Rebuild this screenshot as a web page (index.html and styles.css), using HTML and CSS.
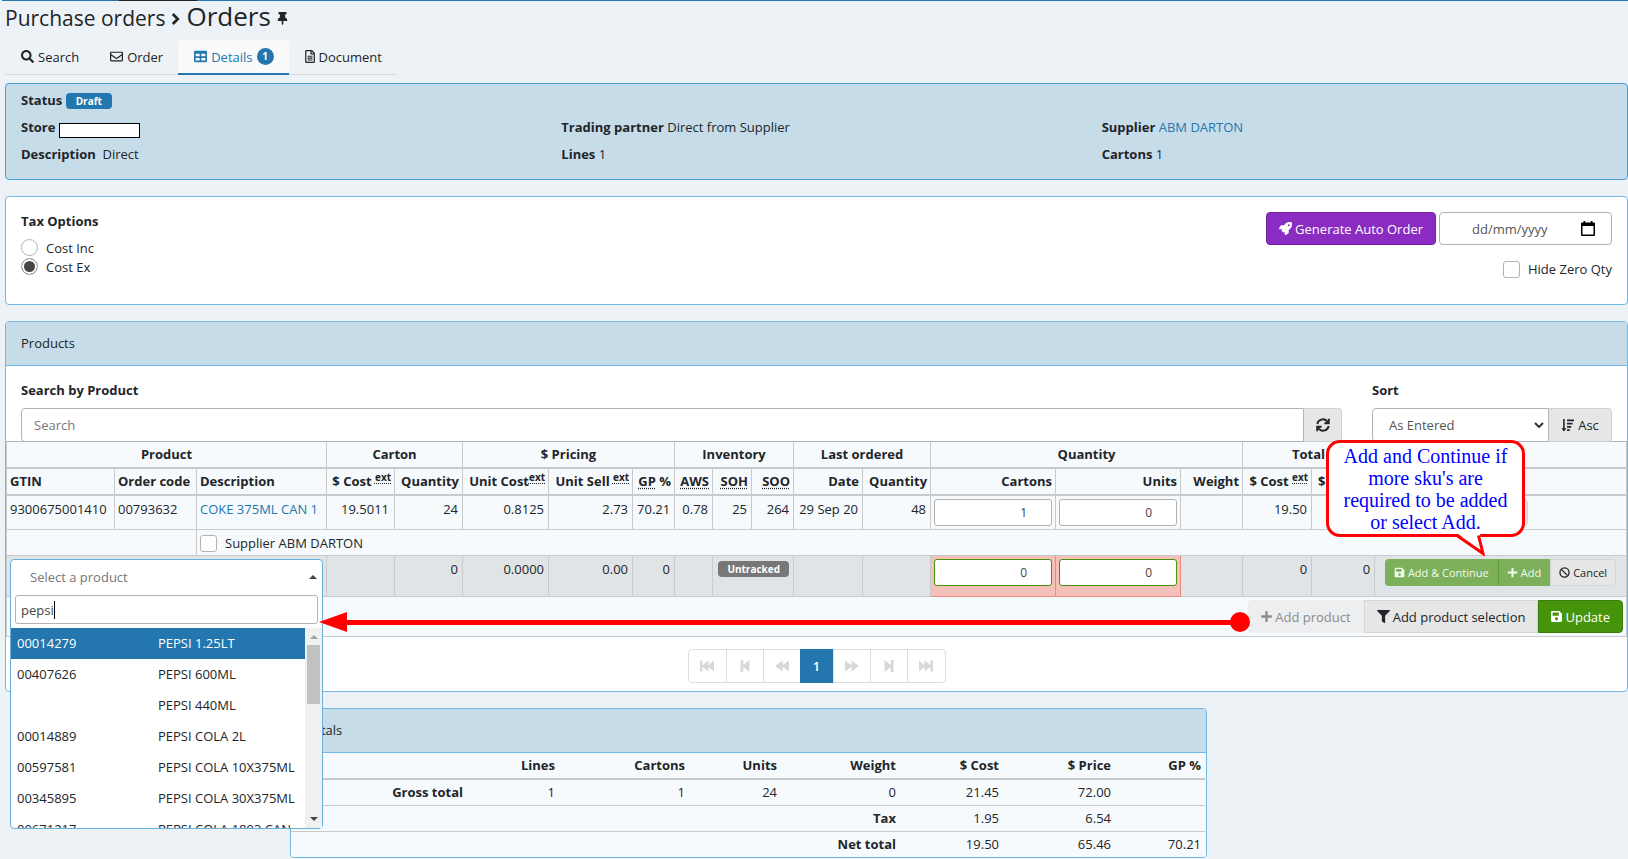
FILE: index.html
```html
<!DOCTYPE html>
<html lang="en">
<head>
<meta charset="utf-8">
<title>Purchase orders - Orders</title>
<link rel="stylesheet" href="styles.css">
</head>
<body>
<svg class="sprite" aria-hidden="true">
  <symbol id="i-search" viewBox="0 0 512 512"><path d="M505 442.7L405.3 343c-4.5-4.5-10.6-7-17-7H372c27.6-35.3 44-79.7 44-128C416 93.1 322.9 0 208 0S0 93.1 0 208s93.1 208 208 208c48.3 0 92.7-16.4 128-44v16.3c0 6.4 2.5 12.5 7 17l99.7 99.7c9.4 9.4 24.6 9.4 33.9 0l28.3-28.3c9.4-9.4 9.4-24.6.1-34zM208 336c-70.7 0-128-57.2-128-128 0-70.7 57.2-128 128-128 70.7 0 128 57.2 128 128 0 70.7-57.2 128-128 128z"/></symbol>
  <symbol id="i-envelope" viewBox="0 0 512 512"><path d="M464 64H48C21.49 64 0 85.49 0 112v288c0 26.51 21.49 48 48 48h416c26.51 0 48-21.49 48-48V112c0-26.51-21.49-48-48-48zm0 48v40.805c-22.422 18.259-58.168 46.651-134.587 106.49-16.841 13.247-50.201 45.072-73.413 44.701-23.208.375-56.579-31.459-73.413-44.701C106.18 199.465 70.425 171.067 48 152.805V112h416zM48 400V214.398c22.914 18.251 55.409 43.862 104.938 82.646 21.857 17.205 60.134 55.186 103.062 54.955 42.717.231 80.509-37.199 103.053-54.947 49.528-38.783 82.032-64.401 104.947-82.653V400H48z"/></symbol>
  <symbol id="i-table" viewBox="0 0 512 512"><path fill-rule="evenodd" d="M48 32h416a48 48 0 0 1 48 48v352a48 48 0 0 1-48 48H48a48 48 0 0 1-48-48V80a48 48 0 0 1 48-48zM64 150v92h160v-92zM288 150v92h160v-92zM64 318v92h160v-92zM288 318v92h160v-92z"/></symbol>
  <symbol id="i-file" viewBox="0 0 384 512"><path fill-rule="evenodd" d="M48 0h202a48 48 0 0 1 34 14l86 86a48 48 0 0 1 14 34v330a48 48 0 0 1-48 48H48a48 48 0 0 1-48-48V48A48 48 0 0 1 48 0zM48 48v416h288V176H232a24 24 0 0 1-24-24V48zM256 52v76h76zM96 224h192v40H96zM96 300h192v40H96zM96 376h192v40H96z"/></symbol>
  <symbol id="i-pin" viewBox="0 0 384 512"><path d="M298.028 214.267L285.793 96H328c13.255 0 24-10.745 24-24V24c0-13.255-10.745-24-24-24H56C42.745 0 32 10.745 32 24v48c0 13.255 10.745 24 24 24h42.207L85.972 214.267C37.465 236.82 0 277.261 0 328c0 13.255 10.745 24 24 24h136v104.007c0 1.242.289 2.467.845 3.578l24 48c2.941 5.882 11.364 5.893 14.311 0l24-48a8.008 8.008 0 0 0 .845-3.578V352h136c13.255 0 24-10.745 24-24-.001-51.183-37.983-91.42-85.973-113.733z"/></symbol>
  <symbol id="i-chevron" viewBox="0 0 10 14"><path d="M2 1.500L7.500 7 2 12.500" fill="none" stroke="currentColor" stroke-width="3"/></symbol>
  <symbol id="i-rocket" viewBox="0 0 512 512"><path d="M505.120 19.094c-1.189-5.531-6.658-11-12.207-12.188C460.716 0 435.507 0 410.407 0 307.175 0 245.269 55.203 199.052 128H94.838c-16.348.016-35.557 11.875-42.887 26.484L2.516 253.297A28.400 28.400 0 0 0 0 264a24 24 0 0 0 24 24h103.816l-22.475 22.469c-11.365 11.361-12.996 32.258 0 45.250l50.905 50.906c11.156 11.188 32.156 13.156 45.277 0l22.475-22.469V488a24 24 0 0 0 24 24 28.560 28.560 0 0 0 10.707-2.516l98.728-49.390c14.629-7.297 26.508-26.500 26.508-42.860V312.797c72.598-46.313 128.035-108.406 128.035-211.094.1-25.203.1-50.406-6.856-82.609zM384.040 168a40 40 0 1 1 40-40 40 40 0 0 1-40 40z"/></symbol>
  <symbol id="i-calendar" viewBox="0 0 14 15"><path fill-rule="evenodd" d="M2.500 0h1.700v1.500h5.600V0h1.700v1.500H13a1 1 0 0 1 1 1V14a1 1 0 0 1-1 1H1a1 1 0 0 1-1-1V2.500a1 1 0 0 1 1-1h1.500zM1.500 5v8.500h11V5z"/></symbol>
  <symbol id="i-refresh" viewBox="0 0 14 14"><path d="M1.300 6A5.600 5.600 0 0 1 11 3.200L12.600 4.800M12.800.8v4.400H8.400M12.700 8A5.600 5.600 0 0 1 3 10.800L1.400 9.200M1.200 13.200V8.800h4.400" fill="none" stroke="currentColor" stroke-width="1.900"/></symbol>
  <symbol id="i-sort" viewBox="0 0 14 14"><path d="M2.300 0h1.700v10h2L3.150 13.500.3 10h2zM6.500.5H14v1.800H6.500zM6.500 4h6v1.800h-6zM6.500 7.500h4.500v1.800H6.500zM6.500 11h3v1.800h-3z"/></symbol>
  <symbol id="i-save" viewBox="0 0 448 512"><path d="M433.941 129.941l-83.882-83.882A48 48 0 0 0 316.118 32H48C21.490 32 0 53.490 0 80v352c0 26.510 21.490 48 48 48h352c26.510 0 48-21.490 48-48V163.882a48 48 0 0 0-14.059-33.941zM224 416c-35.346 0-64-28.654-64-64 0-35.346 28.654-64 64-64s64 28.654 64 64c0 35.346-28.654 64-64 64zm96-304.520V212c0 6.627-5.373 12-12 12H76c-6.627 0-12-5.373-12-12V108c0-6.627 5.373-12 12-12h228.520c3.183 0 6.235 1.264 8.485 3.515l3.480 3.480A11.996 11.996 0 0 1 320 111.480z"/></symbol>
  <symbol id="i-plus" viewBox="0 0 448 512"><path d="M416 208H272V64c0-17.670-14.330-32-32-32h-32c-17.670 0-32 14.330-32 32v144H32c-17.670 0-32 14.330-32 32v32c0 17.670 14.330 32 32 32h144v144c0 17.670 14.330 32 32 32h32c17.670 0 32-14.330 32-32V304h144c17.670 0 32-14.330 32-32v-32c0-17.670-14.330-32-32-32z"/></symbol>
  <symbol id="i-ban" viewBox="0 0 14 14"><circle cx="7" cy="7" r="5.800" fill="none" stroke="currentColor" stroke-width="1.700"/><path d="M3 3l8 8" stroke="currentColor" stroke-width="1.700"/></symbol>
  <symbol id="i-filter" viewBox="0 0 512 512"><path d="M487.976 0H24.028C2.710 0-8.047 25.866 7.058 40.971L192 225.941V432c0 7.831 3.821 15.170 10.237 19.662l80 55.980C298.020 518.690 320 507.493 320 487.980V225.941l184.947-184.970C520.021 25.896 509.338 0 487.976 0z"/></symbol>
  <symbol id="i-first" viewBox="0 0 14 12"><path d="M0 .5h2.500v11H0zM8.500 .5v11L2 6.500v-1zM14 .5v11L8 6.500v-1z"/></symbol>
  <symbol id="i-prev" viewBox="0 0 14 12"><path d="M2.500 0h2.800v12H2.500zM11.500 0v12L4.500 6.500v-1z"/></symbol>
  <symbol id="i-back" viewBox="0 0 14 12"><path d="M7.500 .5v11L0 6zM14 .5v11L7 6.500v-1z"/></symbol>
  <symbol id="i-caret" viewBox="0 0 10 6"><path d="M1 1l4 4 4-4" fill="none" stroke="currentColor" stroke-width="2"/></symbol>
</svg>

<div class="topline"><span class="topline-mark"></span></div>

<main class="page">
  <h1 class="crumbs">
    <span class="crumb-parent">Purchase orders</span>
    <svg class="crumb-arrow"><use href="#i-chevron"/></svg>
    <span>Orders</span>
    <svg class="crumb-pin"><use href="#i-pin"/></svg>
  </h1>

  <nav class="tabs">
    <a class="tab" href="#search"><svg class="icon"><use href="#i-search"/></svg>Search</a>
    <a class="tab" href="#order"><svg class="icon"><use href="#i-envelope"/></svg>Order</a>
    <a class="tab active" href="#details"><svg class="icon"><use href="#i-table"/></svg>Details<span class="count">1</span></a>
    <a class="tab" href="#document"><svg class="icon narrow"><use href="#i-file"/></svg>Document</a>
  </nav>

  <section class="panel summary">
    <div class="fact"><b>Status</b> <span class="badge primary">Draft</span></div>
    <div></div>
    <div></div>
    <div class="fact"><b>Store</b> <span class="masked"></span></div>
    <div class="fact"><b>Trading partner</b> Direct from Supplier</div>
    <div class="fact"><b>Supplier</b> <a href="#supplier">ABM DARTON</a></div>
    <div class="fact"><b>Description</b>&nbsp; Direct</div>
    <div class="fact"><b>Lines</b> 1</div>
    <div class="fact"><b>Cartons</b> 1</div>
  </section>

  <section class="panel options">
    <fieldset class="tax">
      <legend>Tax Options</legend>
      <label class="choice"><input type="radio" name="tax">Cost Inc</label>
      <label class="choice"><input type="radio" name="tax" checked>Cost Ex</label>
    </fieldset>
    <div class="order-tools">
      <div class="order-actions">
        <button class="btn purple" type="button"><svg class="icon"><use href="#i-rocket"/></svg>Generate Auto Order</button>
        <div class="date-field">
          <input type="text" placeholder="dd/mm/yyyy" aria-label="Date">
          <svg class="calendar"><use href="#i-calendar"/></svg>
        </div>
      </div>
      <label class="choice hide-zero"><input type="checkbox">Hide Zero Qty</label>
    </div>
  </section>

  <section class="panel products">
    <h2 class="panel-title">Products</h2>
    <div class="filters">
      <div class="field grow">
        <label for="product-search">Search by Product</label>
        <div class="group">
          <input id="product-search" class="control" type="text" placeholder="Search">
          <button class="addon" type="button" aria-label="Refresh"><svg class="refresh"><use href="#i-refresh"/></svg></button>
        </div>
      </div>
      <div class="field sort">
        <label for="sort">Sort</label>
        <div class="group">
          <div class="select-wrap">
            <select id="sort" class="control"><option>As Entered</option></select>
            <svg class="caret"><use href="#i-caret"/></svg>
          </div>
          <button class="addon asc" type="button"><svg class="icon"><use href="#i-sort"/></svg>Asc</button>
        </div>
      </div>
    </div>

    <table class="grid">
      <colgroup>
        <col class="w-gtin"><col class="w-code"><col class="w-desc">
        <col class="w-68"><col class="w-68">
        <col class="w-86"><col class="w-84"><col class="w-42">
        <col class="w-38"><col class="w-39"><col class="w-42">
        <col class="w-69"><col class="w-68">
        <col class="w-125"><col class="w-125"><col class="w-62">
        <col class="w-69"><col class="w-63"><col>
      </colgroup>
      <thead>
        <tr>
          <th colspan="3">Product</th><th colspan="2">Carton</th><th colspan="3">$ Pricing</th>
          <th colspan="3">Inventory</th><th colspan="2">Last ordered</th><th colspan="3">Quantity</th>
          <th colspan="2">Total</th><th></th>
        </tr>
        <tr class="names">
          <th class="left">GTIN</th><th class="left">Order code</th><th class="left">Description</th>
          <th>$ Cost <sup>ext</sup></th><th>Quantity</th>
          <th>Unit Cost<sup>ext</sup></th><th>Unit Sell <sup>ext</sup></th><th><abbr>GP</abbr> %</th>
          <th><abbr>AWS</abbr></th><th><abbr>SOH</abbr></th><th><abbr>SOO</abbr></th>
          <th>Date</th><th>Quantity</th>
          <th>Cartons</th><th>Units</th><th>Weight</th>
          <th>$ Cost <sup>ext</sup></th><th class="currency">$</th><th></th>
        </tr>
      </thead>
      <tbody>
        <tr>
          <td class="left">9300675001410</td><td class="left">00793632</td><td class="left"><a href="#coke">COKE 375ML CAN 1</a></td>
          <td class="pad">19.5011</td><td>24</td><td>0.8125</td><td>2.73</td><td class="pad">70.21</td>
          <td>0.78</td><td>25</td><td>264</td><td>29 Sep 20</td><td>48</td>
          <td><input class="qty" type="text" value="1" aria-label="Cartons"></td>
          <td><input class="qty" type="text" value="0" aria-label="Units"></td>
          <td></td><td>19.50</td><td></td>
          <td class="center"><button class="btn small grey remove" type="button" aria-label="Remove"><svg class="icon"><use href="#i-ban"/></svg></button></td>
        </tr>
        <tr>
          <td colspan="2"></td>
          <td class="left" colspan="17"><label class="choice"><input type="checkbox">Supplier ABM DARTON</label></td>
        </tr>
        <tr class="new-line">
          <td class="left" colspan="3">
            <div class="picker-anchor">
              <div class="picker">
                <button class="picker-value" type="button">Select a product<span class="tri up"></span></button>
                <div class="picker-search"><input type="text" value="pepsi" aria-label="Find product"><span class="cursor"></span></div>
                <div class="picker-body">
                  <ul class="picker-list">
                    <li class="selected"><span>00014279</span><span>PEPSI 1.25LT</span></li>
                    <li><span>00407626</span><span>PEPSI 600ML</span></li>
                    <li><span></span><span>PEPSI 440ML</span></li>
                    <li><span>00014889</span><span>PEPSI COLA 2L</span></li>
                    <li><span>00597581</span><span>PEPSI COLA 10X375ML</span></li>
                    <li><span>00345895</span><span>PEPSI COLA 30X375ML</span></li>
                    <li><span>00671217</span><span>PEPSI COLA 1893 CAN</span></li>
                  </ul>
                  <div class="scrollbar"><span class="tri up dim"></span><span class="thumb"></span><span class="tri down"></span></div>
                </div>
              </div>
            </div>
          </td>
          <td></td><td>0</td><td>0.0000</td><td>0.00</td><td>0</td><td></td>
          <td colspan="2"><span class="badge grey">Untracked</span></td>
          <td></td><td></td>
          <td class="error"><input class="qty valid" type="text" value="0" aria-label="New cartons"></td>
          <td class="error"><input class="qty valid" type="text" value="0" aria-label="New units"></td>
          <td></td><td>0</td><td>0</td>
          <td class="center">
            <div class="btn-group">
              <button class="btn small soft" type="button"><svg class="icon"><use href="#i-save"/></svg>Add &amp; Continue</button>
              <button class="btn small soft" type="button"><svg class="icon"><use href="#i-plus"/></svg>Add</button>
              <button class="btn small grey" type="button"><svg class="icon"><use href="#i-ban"/></svg>Cancel</button>
            </div>
          </td>
        </tr>
        <tr>
          <td class="footer-cell" colspan="19">
            <div class="btn-group">
              <button class="btn grey" type="button" disabled><svg class="icon medium"><use href="#i-plus"/></svg>Add product</button>
              <button class="btn grey" type="button"><svg class="icon"><use href="#i-filter"/></svg>Add product selection</button>
              <button class="btn green" type="button"><svg class="icon medium"><use href="#i-save"/></svg>Update</button>
            </div>
          </td>
        </tr>
      </tbody>
    </table>

    <nav class="pager">
      <button type="button" aria-label="First"><svg><use href="#i-first"/></svg></button>
      <button type="button" aria-label="Previous"><svg><use href="#i-prev"/></svg></button>
      <button type="button" aria-label="Back"><svg><use href="#i-back"/></svg></button>
      <button type="button" class="current">1</button>
      <button type="button" aria-label="Forward"><svg class="flip"><use href="#i-back"/></svg></button>
      <button type="button" aria-label="Next"><svg class="flip"><use href="#i-prev"/></svg></button>
      <button type="button" aria-label="Last"><svg class="flip"><use href="#i-first"/></svg></button>
    </nav>

    <div class="arrow"></div>
    <div class="callout">
      <p>Add and Continue if<br>more sku's are<br>required to be added<br>or select Add.</p>
      <svg class="callout-tail" viewBox="0 0 32 22"><path d="M3 0L27 18 25 0z" fill="#fff"/><path d="M2 1.500L28 19.500 23.500 1.500" fill="none" stroke="#f00" stroke-width="3"/></svg>
    </div>
  </section>

  <section class="panel totals">
    <h2 class="panel-title">Totals</h2>
    <table class="sums">
      <colgroup><col class="s-label"><col class="s-lines"><col class="s-cartons"><col class="s-units"><col class="s-weight"><col class="s-cost"><col class="s-price"><col></colgroup>
      <thead>
        <tr><th></th><th>Lines</th><th>Cartons</th><th>Units</th><th>Weight</th><th>$ Cost</th><th>$ Price</th><th>GP %</th></tr>
      </thead>
      <tbody>
        <tr><th>Gross total</th><td>1</td><td>1</td><td>24</td><td>0</td><td>21.45</td><td>72.00</td><td></td></tr>
        <tr><th colspan="5">Tax</th><td>1.95</td><td>6.54</td><td></td></tr>
        <tr><th colspan="5">Net total</th><td>19.50</td><td>65.46</td><td>70.21</td></tr>
      </tbody>
    </table>
  </section>
</main>
</body>
</html>
```

FILE: styles.css
```css
* { box-sizing: border-box; }

body {
  margin: 0;
  background: #edf2f6;
  color: #212529;
  font: 13px/20px "Open Sans", sans-serif;
}

button, input, select { font: inherit; color: inherit; margin: 0; }
a { color: #2377ae; text-decoration: none; }
b, th, legend, .field label { font-weight: 700; }
svg { fill: currentColor; }
.sprite { display: none; }

.icon { width: 13px; height: 13px; flex: none; }
.icon.narrow { width: 10px; }
.icon.medium { width: 11px; }

.topline { height: 1px; margin-left: 2px; background: #2377ae; }
.topline-mark { display: block; width: 78px; height: 1px; margin-left: 117px; background: #222; }

.page { padding-left: 5px; }

.crumbs {
  display: flex;
  align-items: baseline;
  gap: 6px;
  height: 39px;
  margin: 0;
  font-size: 26px;
  line-height: 30px;
  font-weight: 400;
}
.crumb-parent { font-size: 21px; }
.crumb-arrow { width: 9px; height: 14px; }
.crumb-pin { width: 11px; height: 13px; align-self: center; margin-bottom: 5px; }

.tabs { display: inline-flex; vertical-align: top; height: 35px; border-bottom: 1px solid #d5d8dc; }
.tab {
  display: flex;
  align-items: center;
  gap: 4px;
  height: 35px;
  padding: 0 15px 0 16px;
  border-bottom: 2px solid transparent;
  color: #212529;
}
.tab.active {
  background: #fafafa;
  border-bottom-color: #2377ae;
  border-radius: 4px 4px 0 0;
  color: #2377ae;
}
.count {
  width: 17px;
  height: 17px;
  border-radius: 50%;
  background: #2377ae;
  color: #fff;
  font-size: 10px;
  font-weight: 700;
  line-height: 17px;
  text-align: center;
}

.panel {
  border: 1px solid #73b9e6;
  border-radius: 4px;
  background: #fff;
  margin-bottom: 16px;
}
.panel-title {
  margin: 0;
  padding: 11px 15px 12px;
  background: #c6dce9;
  border-bottom: 1px solid #73b9e6;
  border-radius: 3px 3px 0 0;
  font-size: 13px;
  font-weight: 400;
}

.summary {
  display: grid;
  grid-template-columns: repeat(3, 1fr);
  row-gap: 7px;
  margin-top: 8px;
  padding: 6px 0 15px;
  border-color: #4a9fd8;
  background: #c6dce9;
}
.fact { height: 20px; padding-left: 15px; }
.badge {
  display: inline-block;
  height: 16px;
  padding: 0 10px;
  border-radius: 4px;
  color: #fff;
  font-size: 10px;
  font-weight: 700;
  line-height: 16px;
}
.badge.primary { background: #2377ae; }
.badge.grey { padding: 0 9px; background: #777; }
.masked {
  display: inline-block;
  width: 81px;
  height: 15px;
  border: 1px solid #000;
  background: #fff;
  vertical-align: -6px;
}

.options { display: flex; justify-content: space-between; padding: 14px 15px 25px; }
.tax { margin: 0; padding: 0; border: 0; }
.tax legend { padding: 0; margin-bottom: 7px; }
.choice { display: flex; align-items: center; gap: 8px; }
.tax .choice { height: 19px; }
.choice input {
  appearance: none;
  width: 17px;
  height: 17px;
  border: 1px solid #b3b3b3;
  border-radius: 3px;
  background: #fff;
}
.choice input[type="radio"] { border-radius: 50%; }
.choice input[type="radio"]:checked { background: #444; box-shadow: inset 0 0 0 2px #fff; }
.order-tools { display: flex; flex-direction: column; align-items: flex-end; gap: 14px; padding-top: 1px; }
.order-actions { display: flex; gap: 3px; }

.btn {
  display: inline-flex;
  align-items: center;
  gap: 3px;
  height: 33px;
  padding: 0 12px;
  border: 1px solid transparent;
  border-radius: 4px;
  white-space: nowrap;
}
.btn.purple { background: #8a2bc2; border-color: #7622a8; color: #fff; }
.btn.green { background: #46940b; border-color: #3b7d09; color: #fff; }
.btn.grey { background: #e6e6e6; border-color: #d5d5d5; }
.btn.grey:disabled { background: #eceeef; border-color: #eceeef; color: #8a8c8e; }
.btn.small { height: 27px; padding: 0 8px; font-size: 11px; }
.btn.small .icon { width: 11px; height: 11px; }
.btn.soft { background: #7db05a; color: #f4faf0; font-weight: 500; }
.btn.soft + .btn.soft { border-left-color: #5c9c32; }
.remove { width: 55px; justify-content: center; }
.btn-group { display: inline-flex; vertical-align: top; }
.btn-group .btn { border-radius: 0; }
.btn-group .btn:first-child { border-radius: 4px 0 0 4px; }
.btn-group .btn:last-child { border-radius: 0 4px 4px 0; }

.date-field {
  display: flex;
  align-items: center;
  width: 173px;
  height: 33px;
  padding: 0 16px 0 32px;
  border: 1px solid #b3b3b3;
  border-radius: 4px;
}
.date-field input { flex: 1; min-width: 0; padding: 0; border: 0; outline: 0; background: none; }
.date-field input::placeholder { color: #555; }
.calendar { width: 14px; height: 15px; color: #000; }

.products { position: relative; }
.filters { display: flex; gap: 30px; padding: 14px 15px 0; }
.field { display: flex; flex-direction: column; gap: 8px; }
.grow { flex: 1; }
.sort { width: 240px; }
.group { display: flex; }
.control {
  width: 100%;
  height: 34px;
  padding: 0 12px;
  border: 1px solid #b3b3b3;
  border-radius: 4px 0 0 4px;
  background: #fff;
  color: #555;
}
.control::placeholder { color: #777; }
.select-wrap { position: relative; flex: 1; }
select.control { appearance: none; padding-left: 16px; }
.caret { position: absolute; right: 5px; top: 14px; width: 10px; height: 6px; color: #333; }
.addon {
  display: flex;
  align-items: center;
  justify-content: center;
  gap: 4px;
  flex: none;
  width: 38px;
  height: 34px;
  padding: 0;
  border: 1px solid #d0d0d0;
  border-left: 0;
  border-radius: 0 4px 4px 0;
  background: #e6e6e6;
}
.asc { width: 63px; }
.refresh { width: 14px; height: 14px; }

.grid, .sums {
  width: 100%;
  table-layout: fixed;
  border-collapse: separate;
  border-spacing: 0;
  background: #f6fafd;
}
.grid { margin-top: -1px; border-top: 1px solid #b3b3b3; }
.grid th, .grid td {
  padding: 3px 4px 2px;
  border-right: 1px solid #c8cbce;
  border-bottom: 1px solid #c8cbce;
  text-align: right;
  vertical-align: top;
  white-space: nowrap;
}
.grid tr > :first-child { border-left: 1px solid #c8cbce; }
.grid th { height: 27px; padding: 2px 3px 3px; border-bottom-width: 2px; text-align: center; }
.grid .names th { text-align: right; }
.grid .left, .grid .names .left { text-align: left; }
.grid .names .currency { padding-left: 6px; text-align: left; }
.grid .center { padding-top: 3px; text-align: center; }
.grid td { height: 26px; }
.grid td.left { padding-left: 3px; }
.grid td.pad { padding-right: 5px; }
.grid td:has(.qty) { padding: 3px; }
.grid .footer-cell { padding: 3px; }
.grid abbr, .grid sup { text-decoration: underline dotted; text-underline-offset: 2px; }
.grid sup { font-size: 10px; line-height: 0; }

.w-gtin { width: 109px; }
.w-code { width: 82px; }
.w-desc { width: 130px; }
.w-38 { width: 38px; }
.w-39 { width: 39px; }
.w-42 { width: 42px; }
.w-62 { width: 62px; }
.w-63 { width: 63px; }
.w-68 { width: 68px; }
.w-69 { width: 69px; }
.w-84 { width: 84px; }
.w-86 { width: 86px; }
.w-125 { width: 125px; }

.qty {
  display: block;
  width: 100%;
  height: 27px;
  padding: 0 24px 0 8px;
  border: 1px solid #b3b3b3;
  border-radius: 3px;
  background: #fff;
  color: #444;
  font-size: 12px;
  text-align: right;
}
.qty.valid { border-color: #46940b; }
.grid .new-line td { height: 41px; background: #e0e4e7; }
.grid .new-line td.error { background: #f5c0ba; border-color: #ea8b80; }
.grid .new-line .badge { vertical-align: top; margin-top: 2px; }

.picker-anchor { position: relative; }
.picker {
  position: absolute;
  z-index: 2;
  top: 0;
  left: 0;
  width: 313px;
  border: 1px solid #67b0e0;
  border-radius: 4px;
  background: #fff;
}
.picker-value {
  display: flex;
  justify-content: space-between;
  align-items: center;
  width: 100%;
  height: 35px;
  padding: 0 5px 2px 19px;
  border: 0;
  background: none;
  color: #777;
}
.tri { border: 4px solid transparent; }
.tri.up { border-top: 0; border-bottom-color: #444; }
.tri.down { border-bottom: 0; border-top-color: #444; }
.tri.dim { border-bottom-color: #a3a3a3; }
.picker-search {
  display: flex;
  align-items: center;
  height: 29px;
  margin: 0 4px 4px;
  padding: 0 5px;
  border: 1px solid #b3b3b3;
  border-radius: 3px;
}
.picker-search input { width: 33px; padding: 0; border: 0; outline: 0; background: none; color: #444; }
.cursor { width: 1px; height: 18px; background: #000; }
.picker-body { display: flex; height: 200px; }
.picker-list { flex: 1; margin: 0; padding: 0; list-style: none; overflow: hidden; }
.picker-list li { display: grid; grid-template-columns: 141px 1fr; padding: 5px 6px 6px; }
.picker-list .selected { background: #2377ae; color: #fff; }
.scrollbar {
  display: flex;
  flex-direction: column;
  align-items: center;
  width: 17px;
  padding: 7px 0;
  background: #f1f1f1;
}
.thumb { width: 13px; height: 59px; margin: 6px 0 auto; background: #c1c1c1; }

.pager { display: flex; justify-content: center; padding: 12px 0 8px; }
.pager button {
  display: flex;
  align-items: center;
  justify-content: center;
  width: 38px;
  height: 34px;
  margin-right: -1px;
  padding: 0;
  border: 1px solid #ddd;
  background: #fff;
  color: #d8d8d8;
}
.pager button:first-child { width: 39px; border-radius: 4px 0 0 4px; }
.pager button:last-child { width: 39px; margin-right: 0; border-radius: 0 4px 4px 0; }
.pager .current { width: 34px; background: #2377ae; border-color: #2377ae; color: #fff; font-weight: 600; }
.pager svg { width: 14px; height: 12px; }
.flip { transform: scaleX(-1); }

/* Annotation arrow from the footer buttons to the product picker */
.arrow {
  position: absolute;
  z-index: 3;
  top: 298px;
  left: 340px;
  right: 387px;
  height: 5px;
  background: #f00;
}
.arrow::before {
  content: "";
  position: absolute;
  left: -27px;
  top: -8px;
  border: solid transparent;
  border-width: 10px 28px 10px 0;
  border-right-color: #f00;
}
.arrow::after {
  content: "";
  position: absolute;
  right: -10px;
  top: -8px;
  width: 20px;
  height: 20px;
  border-radius: 50%;
  background: #f00;
}

/* Annotation bubble over the add buttons */
.callout {
  position: absolute;
  z-index: 3;
  top: 118px;
  right: 102px;
  width: 199px;
  height: 97px;
  border: 3px solid #f00;
  border-radius: 14px;
  background: #fff;
  color: #00f;
  font: 20px/22px "Liberation Serif", serif;
  text-align: center;
}
.callout p { margin: 2px 0 0; }
.callout-tail { position: absolute; right: 35px; top: 91px; width: 32px; height: 22px; }

.totals { width: 917px; max-width: 100%; margin: 0 0 0 285px; }
.sums { padding-right: 1px; border-radius: 0 0 3px 3px; }
.sums th, .sums td { height: 26px; padding: 2px 4px 3px; border-bottom: 1px solid #c8cbce; text-align: right; }
.sums thead th { height: 27px; border-bottom-width: 2px; }
.sums tbody tr:last-child > * { height: 25px; border-bottom: 0; }
.s-label { width: 176px; }
.s-lines { width: 92px; }
.s-cartons { width: 130px; }
.s-units { width: 92px; }
.s-weight { width: 119px; }
.s-cost { width: 103px; }
.s-price { width: 112px; }
```
